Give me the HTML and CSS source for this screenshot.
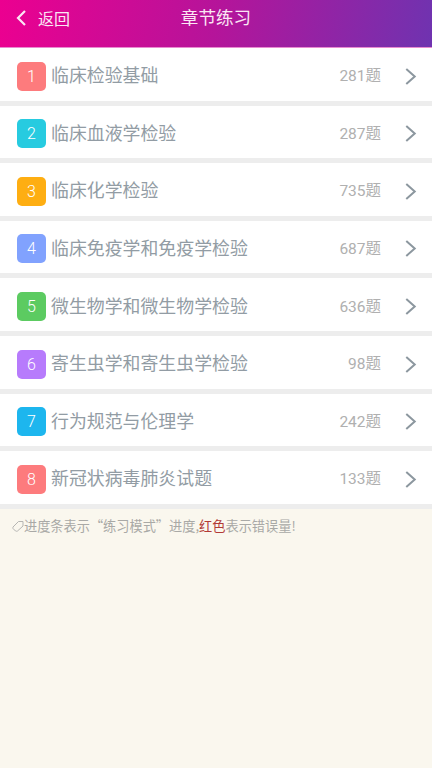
FILE: index.html
```html
<!DOCTYPE html>
<html lang="zh-CN">
<head>
<meta charset="utf-8">
<title>章节练习</title>
<link rel="stylesheet" href="styles.css">
</head>
<body>
<header class="topbar">
  <div class="back">
    <svg class="back-icon" viewBox="0 0 12 18"><path d="M10 2 L3 9 L10 16"/></svg>
    <span>返回</span>
  </div>
  <h1 class="title">章节练习</h1>
</header>
<ul class="list">
  <li class="row"><span class="badge c1">1</span><span class="name">临床检验基础</span><span class="count">281题</span><svg class="chev" viewBox="0 0 12 18"><path d="M2 2 L10 9 L2 16"/></svg></li>
  <li class="row"><span class="badge c2">2</span><span class="name">临床血液学检验</span><span class="count">287题</span><svg class="chev" viewBox="0 0 12 18"><path d="M2 2 L10 9 L2 16"/></svg></li>
  <li class="row"><span class="badge c3">3</span><span class="name">临床化学检验</span><span class="count">735题</span><svg class="chev" viewBox="0 0 12 18"><path d="M2 2 L10 9 L2 16"/></svg></li>
  <li class="row"><span class="badge c4">4</span><span class="name">临床免疫学和免疫学检验</span><span class="count">687题</span><svg class="chev" viewBox="0 0 12 18"><path d="M2 2 L10 9 L2 16"/></svg></li>
  <li class="row"><span class="badge c5">5</span><span class="name">微生物学和微生物学检验</span><span class="count">636题</span><svg class="chev" viewBox="0 0 12 18"><path d="M2 2 L10 9 L2 16"/></svg></li>
  <li class="row"><span class="badge c6">6</span><span class="name">寄生虫学和寄生虫学检验</span><span class="count">98题</span><svg class="chev" viewBox="0 0 12 18"><path d="M2 2 L10 9 L2 16"/></svg></li>
  <li class="row"><span class="badge c7">7</span><span class="name">行为规范与伦理学</span><span class="count">242题</span><svg class="chev" viewBox="0 0 12 18"><path d="M2 2 L10 9 L2 16"/></svg></li>
  <li class="row"><span class="badge c1">8</span><span class="name">新冠状病毒肺炎试题</span><span class="count">133题</span><svg class="chev" viewBox="0 0 12 18"><path d="M2 2 L10 9 L2 16"/></svg></li>
</ul>
<p class="note">
  <svg class="tag" viewBox="0 0 12 12"><path d="M1 7 L6.5 1.5 H11 V6 L5.5 11 Q4.5 11.5 3.5 11 L1 8.5 Q0.7 7.7 1 7 Z"/></svg><span>进度条表示“练习模式”进度,<em class="red">红色</em>表示错误量!</span>
</p>
</body>
</html>
```
FILE: styles.css
```css
* { box-sizing: border-box; }
html, body { margin: 0; padding: 0; }
body {
  width: 432px;
  height: 768px;
  overflow: hidden;
  background: #faf7ee;
  font-family: "Roboto", "Noto Sans CJK SC", sans-serif;
}
.topbar {
  height: 48px;
  display: flex;
  align-items: center;
  position: relative;
  padding: 0 0 11px 15px;
  color: #fbe6f4;
  border-bottom: 1px solid #e88bd0;
  background: linear-gradient(100deg, #ec0090 0%, #b5149a 50%, #6f33b0 100%);
}
.back { display: flex; align-items: center; gap: 11px; font-size: 16px; }
.back-icon { width: 12px; height: 18px; }
.back-icon path { fill: none; stroke: #fbe6f4; stroke-width: 2.2; }
.title {
  position: absolute;
  left: 0; right: 0; top: 6px;
  margin: 0;
  text-align: center;
  font-size: 17.6px;
  line-height: 24px;
  font-weight: 400;
}
.list { list-style: none; margin: 0; padding: 0; }
.row {
  height: 57.6px;
  display: flex;
  align-items: center;
  padding: 3.5px 15.4px 0 17px;
  background: #fff;
  border-bottom: 5px solid #ededed;
}
.badge {
  width: 29px;
  height: 29px;
  flex: none;
  border-radius: 5px;
  display: flex;
  align-items: center;
  justify-content: center;
  color: #fff;
  font-size: 16px;
  font-weight: 300;
  margin-right: 5px;
}
.c1 { background: #fd7b7d; }
.c2 { background: #27cbe0; }
.c3 { background: #feae12; }
.c4 { background: #81a2fe; }
.c5 { background: #5ccb61; }
.c6 { background: #b77bfc; }
.c7 { background: #1db6ee; }
.name { flex: 1; font-size: 17.9px; color: #929ca4; padding-bottom: 3.5px; }
.count { font-size: 15.5px; color: #b0b0b0; margin-right: 22.6px; padding-bottom: 3.5px; }
.chev { width: 13px; height: 19px; flex: none; }
.chev path { fill: none; stroke: #8c979f; stroke-width: 1.9; }
.note {
  margin: 0;
  padding: 8px 0 0 12px;
  display: flex;
  align-items: center;
  font-family: "Noto Sans CJK SC", sans-serif;
  font-size: 13.2px;
  line-height: 18px;
  color: #a9a9a6;
}
.tag { width: 12px; height: 12px; flex: none; }
.tag path { fill: none; stroke: #b5b5b2; stroke-width: 1; }
.red { font-style: normal; color: #b23a36; }
```
